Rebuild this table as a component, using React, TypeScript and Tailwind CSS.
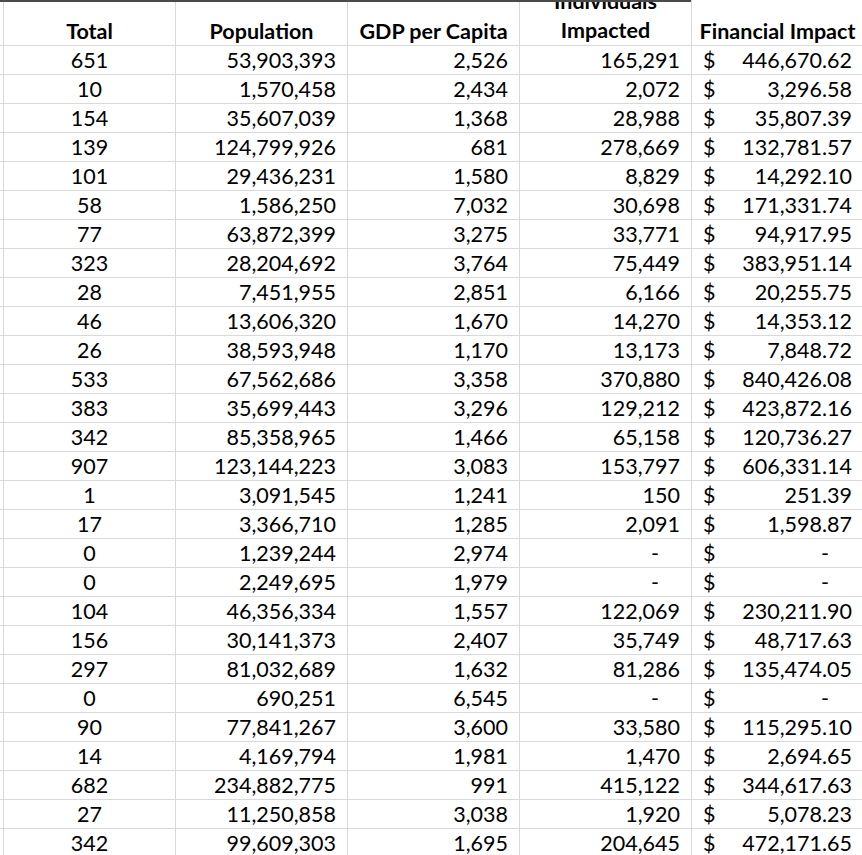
import React from "react";

type Row = [string, string, string, string, string];

const rows: Row[] = [
  ["651", "53,903,393", "2,526", "165,291", "446,670.62"],
  ["10", "1,570,458", "2,434", "2,072", "3,296.58"],
  ["154", "35,607,039", "1,368", "28,988", "35,807.39"],
  ["139", "124,799,926", "681", "278,669", "132,781.57"],
  ["101", "29,436,231", "1,580", "8,829", "14,292.10"],
  ["58", "1,586,250", "7,032", "30,698", "171,331.74"],
  ["77", "63,872,399", "3,275", "33,771", "94,917.95"],
  ["323", "28,204,692", "3,764", "75,449", "383,951.14"],
  ["28", "7,451,955", "2,851", "6,166", "20,255.75"],
  ["46", "13,606,320", "1,670", "14,270", "14,353.12"],
  ["26", "38,593,948", "1,170", "13,173", "7,848.72"],
  ["533", "67,562,686", "3,358", "370,880", "840,426.08"],
  ["383", "35,699,443", "3,296", "129,212", "423,872.16"],
  ["342", "85,358,965", "1,466", "65,158", "120,736.27"],
  ["907", "123,144,223", "3,083", "153,797", "606,331.14"],
  ["1", "3,091,545", "1,241", "150", "251.39"],
  ["17", "3,366,710", "1,285", "2,091", "1,598.87"],
  ["0", "1,239,244", "2,974", "-", "-"],
  ["0", "2,249,695", "1,979", "-", "-"],
  ["104", "46,356,334", "1,557", "122,069", "230,211.90"],
  ["156", "30,141,373", "2,407", "35,749", "48,717.63"],
  ["297", "81,032,689", "1,632", "81,286", "135,474.05"],
  ["0", "690,251", "6,545", "-", "-"],
  ["90", "77,841,267", "3,600", "33,580", "115,295.10"],
  ["14", "4,169,794", "1,981", "1,470", "2,694.65"],
  ["682", "234,882,775", "991", "415,122", "344,617.63"],
  ["27", "11,250,858", "3,038", "1,920", "5,078.23"],
  ["342", "99,609,303", "1,695", "204,645", "472,171.65"],
];

const cell = "w-[172px] shrink-0 border-l border-[#d9d9d9] h-full";

function Num({ value }: { value: string }) {
  return (
    <div className={`${cell} flex items-end justify-end pb-[1px] ${value === "-" ? "pr-[32px]" : "pr-[11px]"}`}>
      {value}
    </div>
  );
}

export default function App() {
  return (
    <div
      className="w-[862px] h-[855px] overflow-hidden bg-white text-black text-[21.5px] leading-[26px]"
      style={{ fontFamily: "Lato, 'Open Sans', sans-serif" }}
    >
      {/* header row */}
      <div className="flex h-[46px] border-b border-[#d9d9d9] relative">
        <div className="absolute left-0 top-0 w-[691px] h-[2px] bg-[#4a4a4a]" />
        <div className="w-[3px] shrink-0" />
        {["Total", "Population", "GDP per Capita"].map((h) => (
          <div key={h} className={`${cell} flex items-end justify-center pb-[1px] font-bold`}>
            {h}
          </div>
        ))}
        <div className={`${cell} flex flex-col items-center justify-end pb-[0px] font-bold overflow-hidden leading-[29px]`}>
          <span>Individuals</span>
          <span>Impacted</span>
        </div>
        <div className={`${cell} flex items-end justify-center pb-[1px] font-bold`}>
          Financial Impact
        </div>
      </div>

      {rows.map((r, i) => (
        <div key={i} className="flex h-[29px] border-b border-[#d9d9d9]">
          <div className="w-[3px] shrink-0" />
          <div className={`${cell} flex items-end justify-center pb-[1px]`}>{r[0]}</div>
          <Num value={r[1]} />
          <Num value={r[2]} />
          <Num value={r[3]} />
          <div className={`${cell} flex items-end justify-between pb-[1px] pl-[11px] ${r[4] === "-" ? "pr-[34px]" : "pr-[11px]"}`}>
            <span>$</span>
            <span>{r[4]}</span>
          </div>
        </div>
      ))}
    </div>
  );
}
